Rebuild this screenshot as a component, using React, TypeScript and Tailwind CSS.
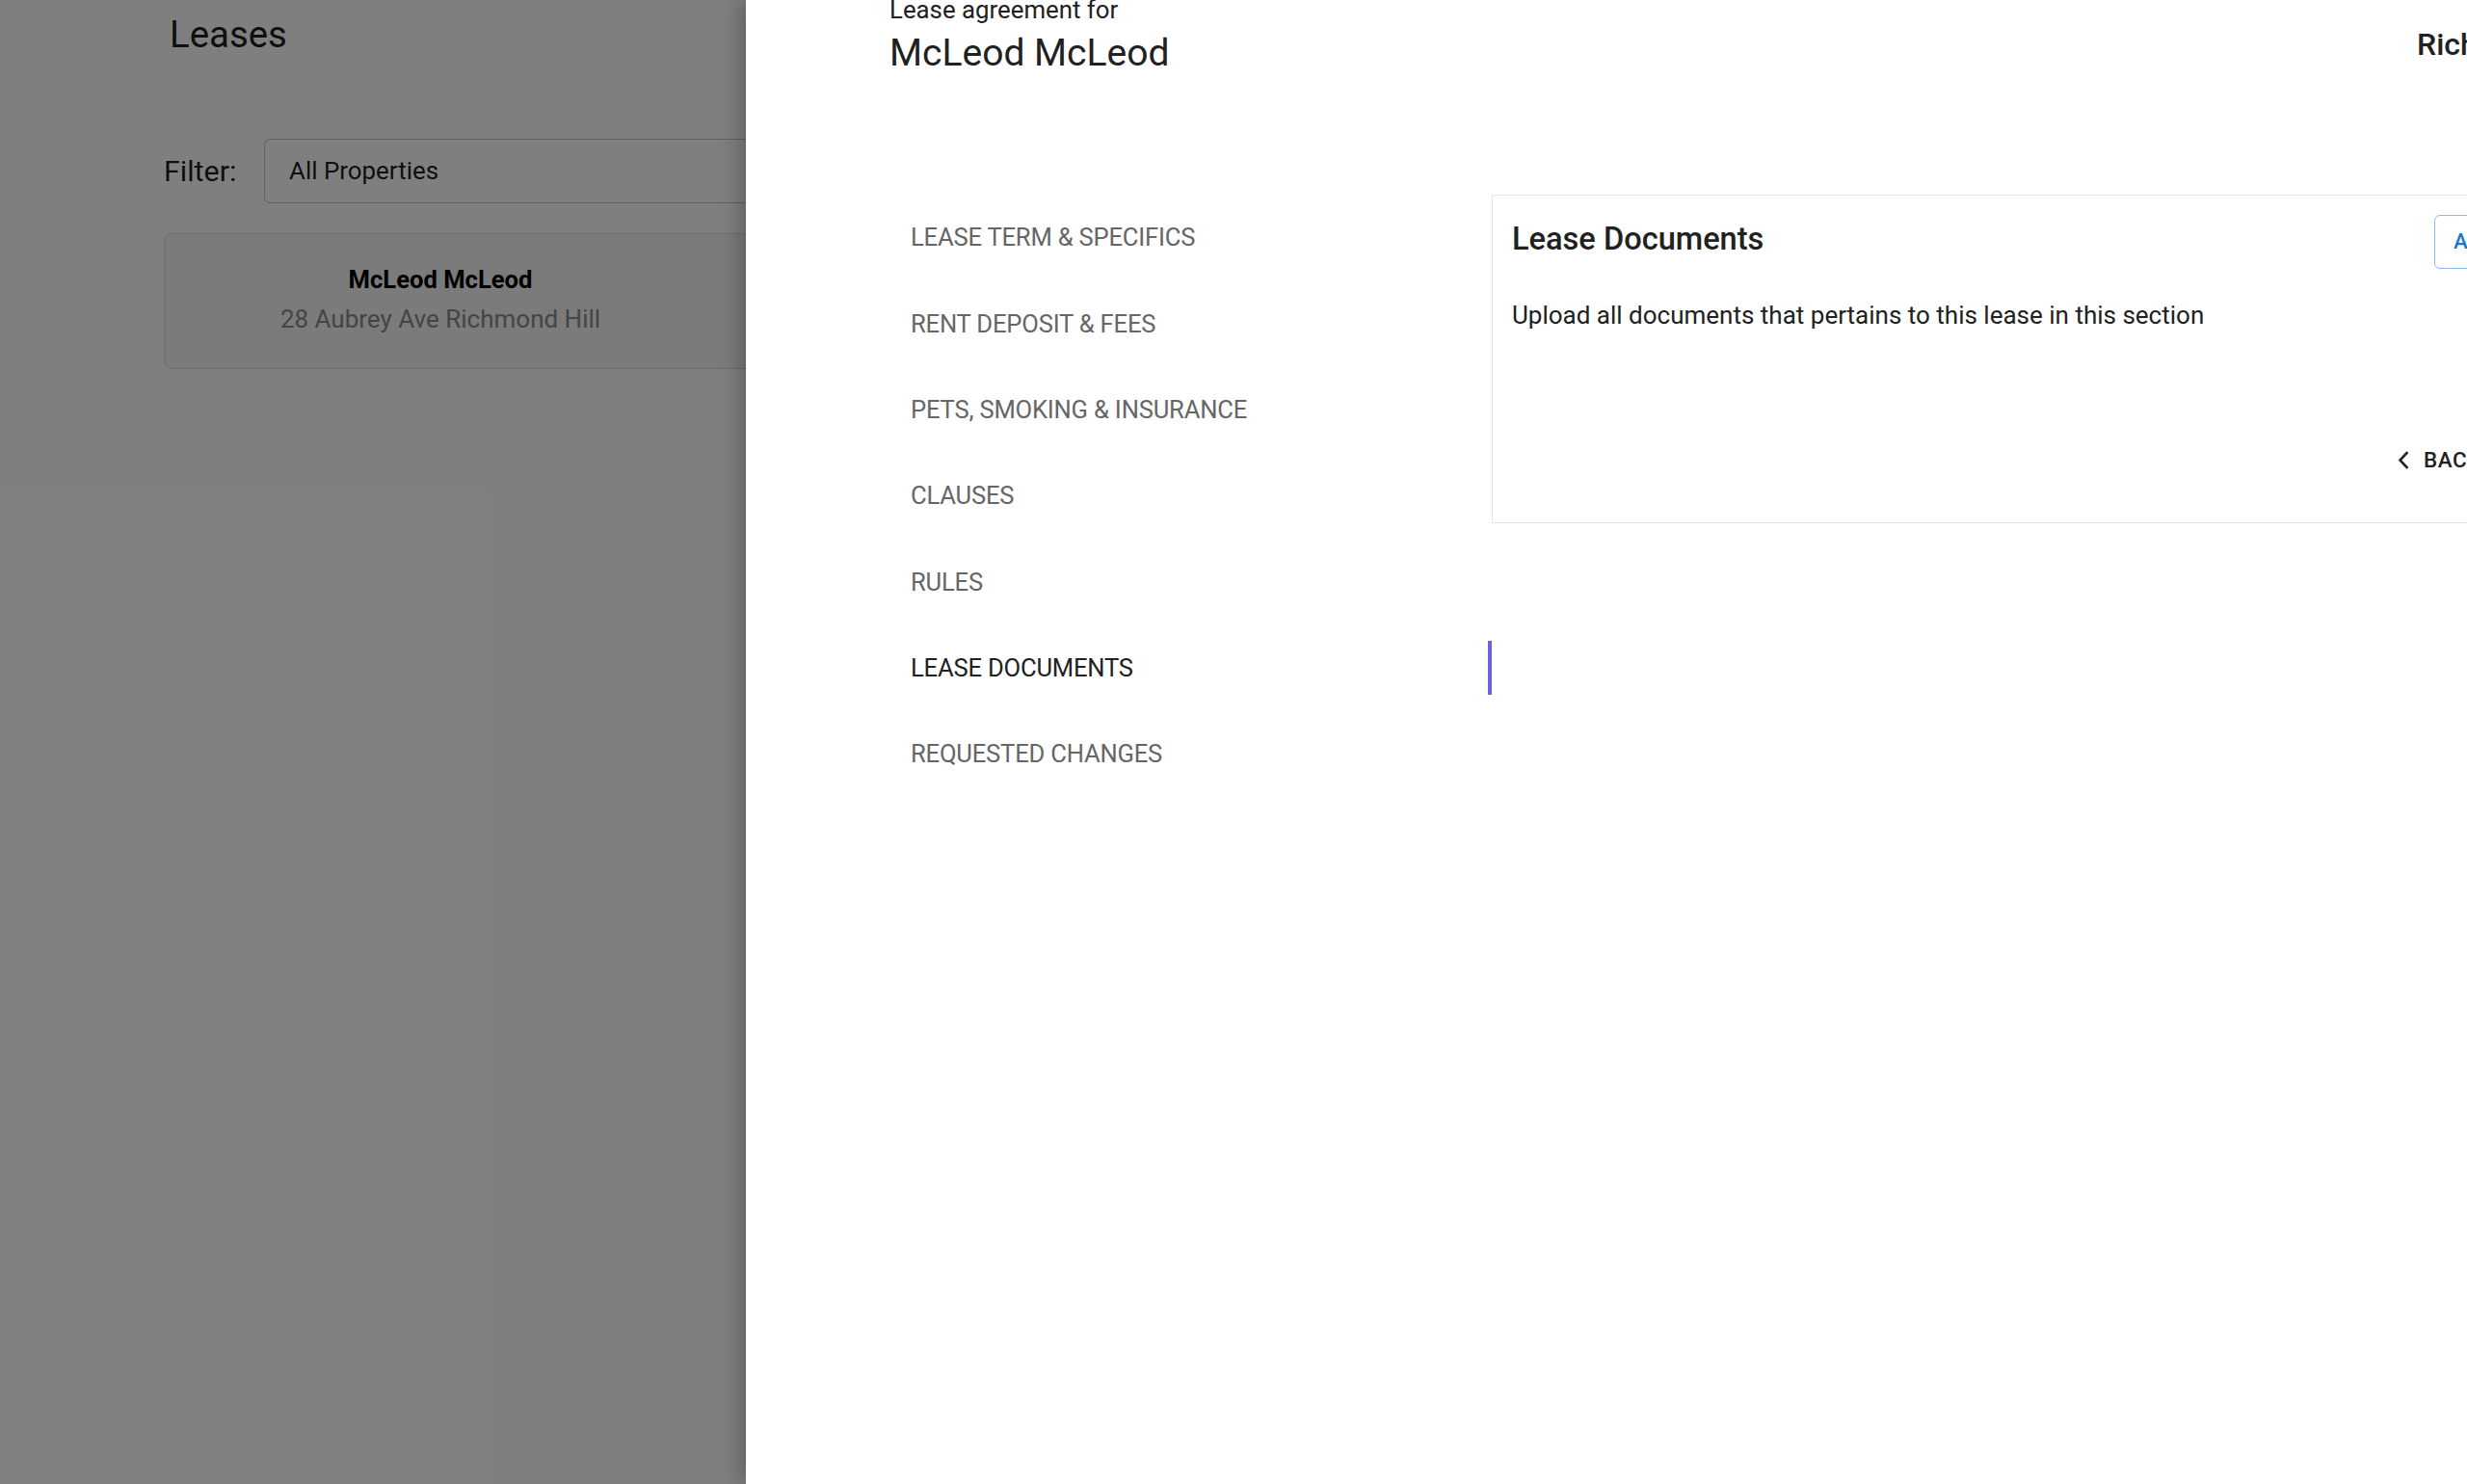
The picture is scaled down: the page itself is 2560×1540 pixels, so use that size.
import React from 'react';

const TABS = [
  'Lease Term & Specifics',
  'Rent Deposit & Fees',
  'Pets, Smoking & Insurance',
  'Clauses',
  'Rules',
  'Lease Documents',
  'Requested Changes',
];

const ACTIVE = 'Lease Documents';

function LeasesPage() {
  return (
    <div className="h-full bg-white pl-[170px]">
      <h1 className="pl-[6px] pt-[13px] text-[38.4px] leading-[46px] text-black/90">Leases</h1>

      <div className="mt-[85px] flex items-center">
        <span className="w-[104px] flex-none text-[30.4px] leading-[36px] text-black/90">Filter:</span>
        <div className="flex h-[67px] w-[1000px] flex-none items-center rounded-[6px] border border-[#c4c4c4] pl-[25px] text-[25.9px] text-black/90">
          All Properties
        </div>
      </div>

      <div className="mt-[31px] h-[141px] w-[1000px] rounded-[8px] border border-[#dcdcdc] bg-[#f6f6f6]">
        <div className="w-[572px] pt-[27px] text-center text-[25.6px] leading-[41px]">
          <div className="font-bold text-black">McLeod McLeod</div>
          <div className="text-[26px] text-[#8a8a8a]">28 Aubrey Ave Richmond Hill</div>
        </div>
      </div>
    </div>
  );
}

function LeaseDocumentsCard() {
  return (
    <div className="h-[341px] w-[1300px] flex-none border border-[#e6e6e6] bg-white px-[20px] pt-[20px]">
      <div className="flex h-[56px] items-center">
        <h2 className="-mt-[6px] w-[957px] flex-none text-[32.6px] font-medium leading-[40px] text-[#212121]">
          Lease Documents
        </h2>
        <button
          type="button"
          className="h-[56px] flex-none rounded-[6px] border border-[#1976d2]/50 px-[19px] text-[22.4px] font-medium uppercase tracking-[0.64px] text-[#1976d2]"
        >
          Add Document
        </button>
      </div>

      <p className="mt-[29px] text-[26px] leading-[38px] text-[#212121]">
        Upload all documents that pertains to this lease in this section
      </p>

      <div className="mt-[103px] flex pl-[906px]">
        <button
          type="button"
          className="flex h-[57px] items-center gap-[15px] px-[13px] text-[22.4px] font-medium uppercase tracking-[0.64px] text-[#212121]"
        >
          <svg width="12" height="19" viewBox="0 0 12 19" fill="none" stroke="currentColor" strokeWidth="2.6" strokeLinecap="square">
            <polyline points="9.5,2 2.5,9.5 9.5,17" />
          </svg>
          Back
        </button>
        <button
          type="button"
          className="ml-[16px] h-[57px] rounded-[6px] bg-[#1976d2] px-[24px] text-[22.4px] font-medium uppercase tracking-[0.64px] text-white"
        >
          Next
        </button>
      </div>
    </div>
  );
}

function LeaseDrawer() {
  return (
    <div className="absolute inset-y-0 left-[774px] right-0 overflow-hidden bg-white shadow-[-6px_0_20px_rgba(0,0,0,0.25)]">
      <div className="w-[2400px] pl-[149px]">
        <div className="flex items-start">
          <div className="w-[1585px] flex-none">
            <div className="-mt-[5px] text-[25.8px] leading-[30px] text-[#212121]">Lease agreement for</div>
            <div className="mt-[7px] text-[39px] leading-[46px] text-[#212121]">McLeod McLeod</div>
          </div>
          <div className="mt-[26px] text-[32px] font-medium leading-[40px] text-[#212121]">Richmond Hill</div>
        </div>

        <div className="mt-[124px] flex items-start">
          <nav className="w-[625px] flex-none">
            {TABS.map((tab) => {
              const active = tab === ACTIVE;
              return (
                <div
                  key={tab}
                  className={
                    active
                      ? 'relative flex h-[89.3px] items-center pl-[22px] text-[25.6px] uppercase tracking-[-0.2px] text-[#212121]'
                      : 'relative flex h-[89.3px] items-center pl-[22px] text-[25.6px] uppercase tracking-[-0.2px] text-[#666666]'
                  }
                >
                  {tab}
                  {active ? (
                    <span className="absolute right-0 top-1/2 h-[56px] w-[4px] -translate-y-1/2 bg-[#6a62e2]" />
                  ) : null}
                </div>
              );
            })}
          </nav>

          <LeaseDocumentsCard />
        </div>
      </div>
    </div>
  );
}

export default function App() {
  return (
    <div
      className="relative h-[1540px] w-full overflow-hidden"
      style={{ fontFamily: 'Roboto, "Noto Sans", sans-serif' }}
    >
      <LeasesPage />
      <div className="absolute inset-0 bg-black/50" />
      <LeaseDrawer />
    </div>
  );
}
